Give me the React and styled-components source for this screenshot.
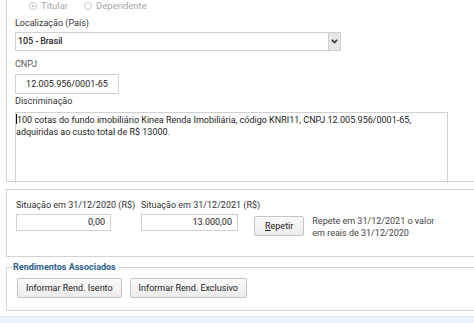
import React from 'react';
import styled, { createGlobalStyle } from 'styled-components';

const GlobalStyle = createGlobalStyle`
  html, body {
    margin: 0;
    padding: 0;
    background: #ffffff;
  }
  body {
    font-family: Roboto, "Noto Sans", Arial, sans-serif;
    font-size: 9px;
    color: #333;
  }
`;

// Whole visible page, clipped at the window edges
const Page = styled.div`
  width: 474px;
  height: 323px;
  overflow: hidden;
  position: relative;
  padding-left: 6px;
  box-sizing: border-box;
`;

// Bordered panel (left / bottom / top lines, open on the right)
const Panel = styled.div`
  width: 480px;
  box-sizing: border-box;
  border: 1px solid #d4d4d4;
  border-right: none;
  border-top: ${(p) => (p.$noTop ? 'none' : '1px solid #d4d4d4')};
  padding: ${(p) => p.$pad || '0 0 0 8px'};
  margin-top: ${(p) => p.$mt || '0'};
  height: ${(p) => p.$h || 'auto'};
`;

const RadioRow = styled.div`
  display: flex;
  align-items: center;
  gap: 16px;
  height: 11px;
  padding-left: 14px;
  color: #a8a8a8;
  font-size: 9.5px;
`;

const Radio = styled.span`
  display: flex;
  align-items: center;
  gap: 4px;
`;

const Dot = styled.span`
  width: 6px;
  height: 6px;
  border-radius: 50%;
  border: 1px solid #c8c8c8;
  position: relative;
  &::after {
    content: '';
    display: ${(p) => (p.$on ? 'block' : 'none')};
    position: absolute;
    left: 2px;
    top: 2px;
    width: 2px;
    height: 2px;
    border-radius: 50%;
    background: #b0b0b0;
  }
`;

const Label = styled.div`
  line-height: 11px;
  margin-top: ${(p) => p.$mt || '0'};
  color: ${(p) => (p.$muted ? '#555' : '#333')};
  white-space: nowrap;
`;

const Select = styled.div`
  display: flex;
  width: 326px;
  height: 19px;
  margin-top: 3px;
  box-sizing: border-box;
  border: 1px solid #d0d0d0;
  background: #fff;
`;

const SelectText = styled.div`
  flex: 1;
  padding-left: 2px;
  line-height: 17px;
  color: #111;
  -webkit-text-stroke: 0.15px #111;
`;

const SelectButton = styled.div`
  width: 11px;
  background: #e6e6e6;
  border-left: 1px solid #d0d0d0;
  display: flex;
  align-items: center;
  justify-content: center;
`;

const Input = styled.div`
  width: ${(p) => p.$w};
  height: ${(p) => p.$h || '19px'};
  margin-top: ${(p) => p.$mt || '0'};
  box-sizing: border-box;
  border: 1px solid #d0d0d0;
  background: #fff;
  color: #222;
  text-align: ${(p) => p.$align || 'right'};
  padding: 0 5px;
  line-height: ${(p) => p.$lh || '17px'};
`;

const TextArea = styled.div`
  width: 433px;
  height: 71px;
  margin-top: 5px;
  box-sizing: border-box;
  border: 1px solid #d0d0d0;
  border-bottom: none;
  padding: 1px 1px 0 0;
  line-height: 12px;
  color: #222;
`;

const Caret = styled.span`
  display: inline-block;
  width: 1px;
  height: 10px;
  background: #000;
  vertical-align: -1px;
`;

const Row = styled.div`
  display: flex;
  align-items: ${(p) => p.$align || 'flex-start'};
  gap: ${(p) => p.$gap || '0'};
  margin-top: ${(p) => p.$mt || '0'};
`;

const Field = styled.div`
  display: flex;
  flex-direction: column;
  gap: 3px;
  width: ${(p) => p.$w};
`;

const Button = styled.button`
  font: inherit;
  font-size: 9px;
  color: #222;
  height: ${(p) => p.$h || '20px'};
  padding: 0 ${(p) => p.$px || '8px'};
  border: 1px solid #c4c4c4;
  border-radius: 2px;
  background: linear-gradient(#fafafa, #ececec);
  cursor: pointer;
  white-space: nowrap;
`;

const Hint = styled.div`
  color: #444;
  line-height: 12px;
  margin-top: 3px;
`;

const Fieldset = styled.fieldset`
  width: 480px;
  box-sizing: border-box;
  margin: 5px 0 0 0;
  padding: 5px 0 12px 10px;
  border: 1px solid #d4d4d4;
  border-right: none;
`;

const Legend = styled.legend`
  padding: 0 2px 0 1px;
  margin-left: -5px;
  font-weight: 700;
  color: #2c5f8c;
  line-height: 11px;
`;

const BottomStrip = styled.div`
  position: absolute;
  left: 0;
  right: 0;
  top: 316px;
  height: 10px;
  background: #eaf2fb;
  border-top: 1px solid #d6e4f1;
`;

const Chevron = () => (
  <svg width="7" height="5" viewBox="0 0 7 5">
    <path d="M0.8 0.8 L3.5 3.6 L6.2 0.8" fill="none" stroke="#333" strokeWidth="1.6" />
  </svg>
);

export default function App() {
  return (
    <>
      <GlobalStyle />
      <Page>
        <Panel $noTop $h="182px">
          <RadioRow>
            <Radio><Dot $on />Titular</Radio>
            <Radio><Dot />Dependente</Radio>
          </RadioRow>
          <Label $mt="7px">Localização (País)</Label>
          <Select>
            <SelectText>105 - Brasil</SelectText>
            <SelectButton><Chevron /></SelectButton>
          </Select>
          <Label $mt="8px" $muted>CNPJ</Label>
          <Input $w="104px" $h="20px" $mt="4px" $align="center" $lh="18px">12.005.956/0001-65</Input>
          <Label $mt="2px">Discriminação</Label>
          <TextArea>
            <Caret />100 cotas do fundo imobiliário Kinea Renda Imobiliária, código KNRI11, CNPJ 12.005.956/0001-65,
            <br />adquiridas ao custo total de R$ 13000.
          </TextArea>
        </Panel>

        <Panel $mt="7px" $h="68px" $pad="10px 0 0 9px">
          <Row>
            <Field $w="125px">
              <Label>Situação em 31/12/2020 (R$)</Label>
              <Input $w="95px" $h="17px" $lh="15px">0,00</Input>
            </Field>
            <Field $w="113px">
              <Label>Situação em 31/12/2021 (R$)</Label>
              <Input $w="97px" $h="17px" $lh="15px">13.000,00</Input>
            </Field>
            <Row $align="center" $gap="8px" $mt="12px">
              <Button $px="10px"><u>R</u>epetir</Button>
              <Hint>Repete em 31/12/2021 o valor<br />em reais de 31/12/2020</Hint>
            </Row>
          </Row>
        </Panel>

        <Fieldset>
          <Legend>Rendimentos Associados</Legend>
          <Row $gap="8px">
            <Button>Informar Rend. Isento</Button>
            <Button>Informar Rend. Exclusivo</Button>
          </Row>
        </Fieldset>
        <BottomStrip />
      </Page>
    </>
  );
}
